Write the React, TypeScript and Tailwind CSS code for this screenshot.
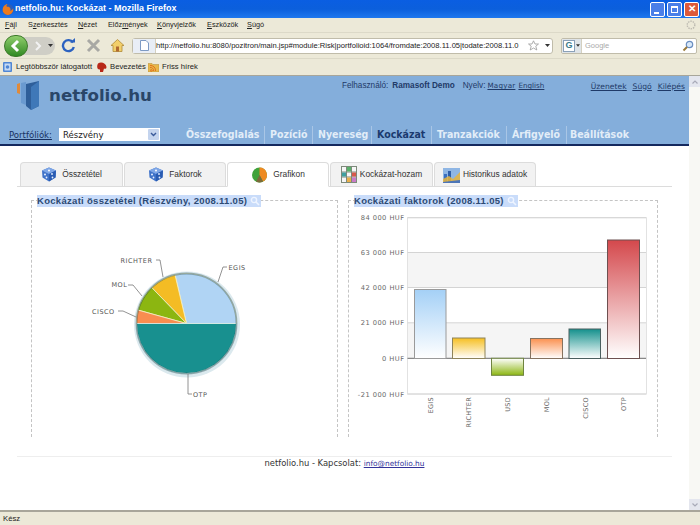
import React from "react";

const ui = { fontFamily: '"Liberation Sans", Tahoma, sans-serif' };
const dv = { fontFamily: '"DejaVu Sans", Verdana, sans-serif' };
const dvc = { fontFamily: '"DejaVu Sans Condensed", "DejaVu Sans", sans-serif' };

function Dice() {
  return (
    <svg width="16" height="15" viewBox="0 0 16 15">
      <path d="M8 0.5L15 3.5L14.5 10.5L8 14.5L1.5 10.5L1 3.5Z" fill="#3f72c8" />
      <path d="M8 0.5L15 3.5L8 7L1 3.5Z" fill="#7ea6e6" />
      <path d="M8 7L15 3.5L14.5 10.5L8 14.5Z" fill="#2a5cb2" />
      <circle cx="8" cy="3.5" r="1" fill="#fff" />
      <circle cx="4" cy="7.5" r="1" fill="#e8f0ff" />
      <circle cx="5.5" cy="10.5" r="0.9" fill="#e8f0ff" />
      <circle cx="11" cy="7" r="0.9" fill="#e8f0ff" />
      <circle cx="11.5" cy="10.5" r="0.9" fill="#e8f0ff" />
    </svg>
  );
}

function PieIcon() {
  return (
    <svg width="17" height="16" viewBox="0 0 17 16">
      <circle cx="8.5" cy="8" r="7.5" fill="#3fa23a" />
      <path d="M8.5 8L8.5 0.5A7.5 7.5 0 0 1 12 14.6Z" fill="#ee8a22" />
      <path d="M8.5 8L12 14.6A7.5 7.5 0 0 1 5 14.6Z" fill="#7c6a3a" />
    </svg>
  );
}

function MatrixIcon() {
  return (
    <svg width="16" height="17" viewBox="0 0 16 17">
      <rect x="0.5" y="0.5" width="15" height="16" fill="#f6f6f6" stroke="#7d8a7a" />
      <path d="M5.5 0.5V16.5M10.5 0.5V16.5M0.5 6H15.5M0.5 11H15.5" stroke="#7d8a7a" />
      <rect x="6" y="1" width="4" height="4.5" fill="#59b06a" />
      <rect x="11" y="6.5" width="4" height="4" fill="#d8584a" />
      <rect x="1" y="6.5" width="4" height="4" fill="#3fa0a0" />
      <rect x="11" y="11.5" width="4" height="4.5" fill="#c97ac8" />
      <rect x="6" y="11.5" width="4" height="4.5" fill="#e9b04a" />
    </svg>
  );
}

function HistIcon() {
  return (
    <svg width="17" height="16" viewBox="0 0 17 16">
      <rect x="0" y="1" width="17" height="15" fill="#8fb6e4" />
      <rect x="1" y="7" width="3" height="8" fill="#3a6fc0" />
      <rect x="5" y="4" width="3" height="11" fill="#2f5ea8" />
      <path d="M0 12L6 9L10 12L17 5V16H0Z" fill="#e7b53c" opacity="0.85" />
      <path d="M0 15L17 13V16H0Z" fill="#4d76b8" />
    </svg>
  );
}

function Tab({
  icon,
  label,
  active,
  gap,
  wide,
}: {
  icon: React.ReactNode;
  label: string;
  active?: boolean;
  gap: string;
  wide: string;
}) {
  return (
    <div
      className={`flex items-center justify-center rounded-t-[4px] border border-[#dcdcdc] text-[8.4px] text-[#333] ${wide} ${gap} ${
        active ? "h-[25px] -mb-px border-b-white bg-white" : "h-[24px] border-b-0 bg-[#f2f2f2]"
      }`}
    >
      {icon}
      <span>{label}</span>
    </div>
  );
}

function PieChart() {
  const cx = 166.5;
  const cy = 133.5;
  const r = 50;
  const sl = (x1: number, y1: number, x2: number, y2: number) =>
    `M${cx} ${cy}L${x1} ${y1}A${r} ${r} 0 0 0 ${x2} ${y2}Z`;
  return (
    <svg width="300" height="235" viewBox="12 11 300 235" className="block" style={dv}>
      <circle cx={cx + 0.5} cy={cy + 1} r={r + 3} fill="#dbe9ee" />
      <path d={sl(216.5, 133.5, 155, 84.8)} fill="#b0d4f4" stroke="#f4f0c8" strokeWidth="0.8" />
      <path d={sl(155, 84.8, 131.7, 97.5)} fill="#f4bc24" stroke="#f4f0c8" strokeWidth="0.8" />
      <path d={sl(131.7, 97.5, 117.8, 120)} fill="#8cb611" stroke="#f4f0c8" strokeWidth="0.8" />
      <path d={sl(117.8, 120, 116.5, 136)} fill="#f98d50" stroke="#f4f0c8" strokeWidth="0.8" />
      <path d={`M${cx - r} ${cy}A${r} ${r} 0 0 0 ${cx + r} ${cy}Z`} fill="#18908f" stroke="#e8f4f0" strokeWidth="0.8" />
      <circle cx={cx} cy={cy} r={r} fill="none" stroke="#123c44" strokeOpacity="0.38" strokeWidth="1.8" />
      <g fill="none" stroke="#777" strokeWidth="0.8">
        <path d="M198 92L203 77H207" />
        <path d="M143 87L140 70H136" />
        <path d="M122 106L113 95H108" />
        <path d="M116 127L103 121H98" />
        <path d="M168 184V204H172" />
      </g>
      <g fontSize="6.5" letterSpacing="0.5" fill="#555">
        <text x="208.5" y="79.5">EGIS</text>
        <text x="100.5" y="73">RICHTER</text>
        <text x="91.5" y="97">MOL</text>
        <text x="72" y="124">CISCO</text>
        <text x="173" y="207">OTP</text>
      </g>
    </svg>
  );
}

function BarChart() {
  const o = (x: number) => x - 349;
  const p = (y: number) => y - 207;
  const ticks: [string, number][] = [
    ["84 000 HUF", 217.7],
    ["63 000 HUF", 252.5],
    ["42 000 HUF", 287.5],
    ["21 000 HUF", 322.8],
    ["0 HUF", 358.3],
    ["-21 000 HUF", 394],
  ];
  const bars = [
    { n: "EGIS", x: 414.5, w: 31.5, y: 289.5, h: 69, c: "gA", s: "#9a9a9a" },
    { n: "RICHTER", x: 452.5, w: 32.5, y: 338, h: 20.5, c: "gB", s: "#8e845a" },
    { n: "MOL", x: 530.5, w: 32, y: 338.5, h: 20, c: "gC", s: "#86725f" },
    { n: "CISCO", x: 569, w: 31.5, y: 329, h: 29.5, c: "gD", s: "#4a5f5f" },
    { n: "OTP", x: 607.5, w: 32, y: 240, h: 118.5, c: "gE", s: "#6d5050" },
  ];
  const names: [number, string][] = [
    [430, "EGIS"],
    [468.5, "RICHTER"],
    [507.5, "USD"],
    [546, "MOL"],
    [585, "CISCO"],
    [623.5, "OTP"],
  ];
  return (
    <svg width="308" height="230" viewBox="0 0 308 230" className="block" style={dv}>
      <defs>
        {[
          ["gA", "#a4d0f6"],
          ["gB", "#f6bf22"],
          ["gC", "#fb9150"],
          ["gD", "#14908c"],
          ["gE", "#d4484c"],
        ].map(([id, c]) => (
          <linearGradient key={id} id={id} x1="0" y1="0" x2="0" y2="1">
            <stop offset="0" stopColor={c} />
            <stop offset="1" stopColor="#ffffff" />
          </linearGradient>
        ))}
        <linearGradient id="gF" x1="0" y1="0" x2="0" y2="1">
          <stop offset="0" stopColor="#ffffff" />
          <stop offset="1" stopColor="#8cb611" />
        </linearGradient>
      </defs>
      <rect x={o(408)} y={p(252.5)} width="238" height="35" fill="#f5f5f5" />
      <rect x={o(408)} y={p(322.8)} width="238" height="35.5" fill="#f5f5f5" />
      <rect x={o(407.5)} y={p(217.7)} width="239" height="176.3" fill="none" stroke="#e2e2e2" />
      {ticks.map(([t, y]) => (
        <g key={t}>
          <line x1={o(407.5)} x2={o(646)} y1={p(y)} y2={p(y)} stroke={t === "0 HUF" ? "#888" : "#d4d4d4"} strokeWidth={t === "0 HUF" ? 1.2 : 1} />
          <text x={o(404.5)} y={p(y) + 2.5} textAnchor="end" fontSize="6.7" letterSpacing="0.45" fill="#666">
            {t}
          </text>
        </g>
      ))}
      {bars.map((b) => (
        <rect key={b.n} x={o(b.x)} y={p(b.y)} width={b.w} height={b.h} fill={`url(#${b.c})`} stroke={b.s} strokeWidth="1" />
      ))}
      <rect x={o(491.5)} y={p(358.3)} width="32" height="17" fill="url(#gF)" stroke="#6f8440" />
      {names.map(([x, t]) => (
        <text
          key={t}
          x={o(x) + 2.5}
          y={p(397)}
          textAnchor="end"
          fontSize="6.5"
          letterSpacing="0.3"
          fill="#666"
          transform={`rotate(-90 ${o(x) + 2.5} ${p(397)})`}
        >
          {t}
        </text>
      ))}
    </svg>
  );
}

function PanelTitle({ text }: { text: string }) {
  return (
    <div className="absolute -top-[6px] left-[5px] flex h-[12px] items-center bg-[#c9dcfa] pr-[1px] text-[9.5px] font-bold leading-none tracking-[0.3px] text-[#2c4a74]">
      <span>{text}</span>
      <svg className="ml-[3px]" width="10" height="10" viewBox="0 0 10 10">
        <circle cx="4" cy="4" r="2.6" fill="none" stroke="#eef4ff" strokeWidth="1.4" />
        <path d="M6 6L9 9" stroke="#eef4ff" strokeWidth="1.6" />
      </svg>
    </div>
  );
}

function Sep() {
  return <span className="h-[18px] w-px bg-[#a9c6e6]" />;
}

function NavItem({ t, active, cls }: { t: string; active?: boolean; cls: string }) {
  return (
    <span className={`${cls} whitespace-nowrap text-[10.5px] font-bold ${active ? "text-[#1b3a6e]" : "text-[#e2edf8]"}`}>
      {t}
    </span>
  );
}

function Menu({ u, rest, pre, cls }: { pre?: string; u: string; rest: string; cls: string }) {
  return (
    <span className={cls}>
      {pre}
      <span className="underline">{u}</span>
      {rest}
    </span>
  );
}

export default function App() {
  return (
    <div className="flex h-[525px] w-[700px] flex-col overflow-hidden bg-white" style={ui}>
      {/* title bar */}
      <div className="flex h-[18px] items-center bg-gradient-to-b from-[#0a5ee2] via-[#0b5fdc] to-[#1f78ee] pl-[2px] pr-[1px]">
        <svg width="12" height="13" viewBox="0 0 13 13">
          <circle cx="6.5" cy="6.5" r="6" fill="#2c5db8" />
          <path d="M1 9C0 5 2 1 6 .5C4.5 2 4.5 3 5.5 3.5C8 3 10 5 9 8C11 7.5 12 6 12 5C13 9 10 12.5 6.5 12.5C4 12.5 2 11 1 9Z" fill="#ec7a1e" />
        </svg>
        <span className="ml-[1px] text-[9px] font-bold text-white">netfolio.hu: Kockázat - Mozilla Firefox</span>
        <div className="ml-auto flex gap-[2px]">
          <div className="flex h-[15px] w-[15px] items-end rounded-[2px] border border-white bg-[#4a7fe8] pb-[2px] pl-[3px]">
            <span className="h-[2px] w-[5px] bg-white" />
          </div>
          <div className="flex h-[15px] w-[15px] items-center justify-center rounded-[2px] border border-white bg-[#4a7fe8]">
            <span className="h-[7px] w-[7px] border border-t-2 border-white" />
          </div>
          <div className="flex h-[15px] w-[15px] items-center justify-center rounded-[2px] border border-white bg-[#dd5a3a] text-[10px] font-bold leading-none text-white">
            ✕
          </div>
        </div>
      </div>

      {/* menu bar */}
      <div className="flex h-[14px] items-center bg-[#ece9d8] text-[7.3px] text-[#222]">
        <Menu cls="ml-[5px] w-[23px]" u="F" rest="ájl" />
        <Menu cls="w-[50px]" pre="S" u="z" rest="erkesztés" />
        <Menu cls="w-[30px]" u="N" rest="ézet" />
        <Menu cls="w-[49px]" pre="Előz" u="m" rest="ények" />
        <Menu cls="w-[50px]" u="K" rest="önyvjelzők" />
        <Menu cls="w-[40px]" u="E" rest="szközök" />
        <Menu cls="" u="S" rest="úgó" />
        <svg className="ml-auto mr-[4px]" width="10" height="10" viewBox="0 0 10 10">
          <circle cx="5" cy="5" r="3.8" fill="none" stroke="#bdbab0" strokeWidth="1.4" strokeDasharray="1.4 1" />
        </svg>
      </div>

      {/* nav bar */}
      <div className="flex h-[26px] items-center border-t border-[#dcd9c8] bg-[#ece9d8] pl-[4px]">
        <div className="relative flex h-[18px] w-[51px] items-center rounded-full bg-[#cfcec6]">
          <div className="absolute left-0 -top-[2px] flex h-[22px] w-[24px] items-center justify-center rounded-full border border-[#3d7a2a] bg-gradient-to-b from-[#8fce6c] to-[#2e8a22]">
            <svg width="14" height="14" viewBox="0 0 14 14">
              <path d="M9 2L4 7L9 12" fill="none" stroke="#fff" strokeWidth="3" />
            </svg>
          </div>
          <svg className="ml-[30px]" width="8" height="10" viewBox="0 0 8 10">
            <path d="M2 1L6 5L2 9" fill="none" stroke="#f2f2f2" strokeWidth="2" />
          </svg>
          <svg className="ml-[6px]" width="5" height="3" viewBox="0 0 5 3">
            <path d="M0 0H5L2.5 3Z" fill="#333" />
          </svg>
        </div>
        <svg className="ml-[6px]" width="15" height="15" viewBox="0 0 15 15">
          <path d="M12 4.5A5.5 5.5 0 1 0 12.8 9" fill="none" stroke="#2c62c0" strokeWidth="2.4" />
          <path d="M9 4.5H14V0Z" fill="#2c62c0" />
        </svg>
        <svg className="ml-[10px]" width="15" height="15" viewBox="0 0 15 15">
          <path d="M2 2L13 13M13 2L2 13" stroke="#a8a8a4" strokeWidth="3" />
        </svg>
        <svg className="ml-[9px]" width="15" height="15" viewBox="0 0 15 15">
          <path d="M1 7.5L7.5 1.5L14 7.5H12V13.5H3V7.5Z" fill="#f2cf6a" stroke="#b08a38" strokeWidth="0.8" />
          <rect x="6" y="8.5" width="3" height="5" fill="#b06a30" />
        </svg>
        <div className="ml-[7px] flex h-[16px] w-[421px] items-center rounded-[3px] border border-[#c0bcaa] bg-white">
          <div className="flex h-full w-[23px] items-center justify-center border-r border-[#d4d0c0] bg-[#e9eef6]">
            <svg width="9" height="11" viewBox="0 0 9 11">
              <path d="M.5 .5H6L8.5 3V10.5H.5Z" fill="#fff" stroke="#7d9ac4" />
            </svg>
          </div>
          <span className="w-[369px] whitespace-nowrap text-[7.6px] text-[#222]">
            http://netfolio.hu:8080/pozitron/main.jsp#module:Risk|portfolioid:1064/fromdate:2008.11.05|todate:2008.11.0
          </span>
          <svg className="ml-[3px]" width="11" height="11" viewBox="0 0 11 11">
            <path d="M5.5 .8L7 4H10.5L7.8 6.2L8.8 10L5.5 8L2.2 10L3.2 6.2L.5 4H4Z" fill="none" stroke="#9a9a9a" strokeWidth="0.8" />
          </svg>
          <svg className="ml-[6px]" width="5" height="3" viewBox="0 0 5 3">
            <path d="M0 0H5L2.5 3Z" fill="#333" />
          </svg>
        </div>
        <div className="ml-[8px] flex h-[16px] w-[136px] items-center rounded-[2px] border border-[#c0bcaa] bg-white">
          <div className="flex h-full w-[20px] items-center gap-[1px] border-r border-[#d4d0c0] bg-[#dfe4e8] pl-[1px]">
            <span className="flex h-[12px] w-[12px] items-center justify-center border border-[#8aa0b8] bg-white text-[9px] font-bold leading-none text-[#3a7a8a]">
              G
            </span>
            <svg width="4" height="3" viewBox="0 0 5 3">
              <path d="M0 0H5L2.5 3Z" fill="#333" />
            </svg>
          </div>
          <span className="ml-[3px] text-[7.5px] text-[#aaa]">Google</span>
          <svg className="ml-auto mr-[2px]" width="12" height="12" viewBox="0 0 12 12">
            <circle cx="7.5" cy="4.5" r="3.2" fill="#d8e8f8" stroke="#6a8ec0" strokeWidth="1.2" />
            <path d="M5 7L1.5 10.5" stroke="#9a7a3a" strokeWidth="2" />
          </svg>
        </div>
      </div>

      {/* bookmarks */}
      <div className="flex h-[17px] items-center border-t border-[#dcd9c8] bg-[#ece9d8] pl-[3px] text-[7.7px] text-[#222]">
        <svg width="9" height="10" viewBox="0 0 9 10">
          <rect width="9" height="10" rx="1" fill="#4f86d4" />
          <rect x="1.5" y="1.5" width="6" height="7" fill="#c6daf4" />
          <circle cx="4.5" cy="5" r="1.8" fill="#4f86d4" />
        </svg>
        <span className="ml-[4px] w-[75px] whitespace-nowrap">Legtöbbször látogatott</span>
        <svg className="ml-[5px]" width="11" height="11" viewBox="0 0 11 11">
          <path d="M2 1.5C5 -.5 10 1 10.5 5C10.5 7 9 7 8 6.5L7 10H4L4 7.5C1 8 .5 4 2 1.5Z" fill="#b82818" />
        </svg>
        <span className="ml-[3px] w-[34px]">Bevezetés</span>
        <svg className="ml-[4px]" width="11" height="10" viewBox="0 0 11 10">
          <path d="M0 1.5H4L5 2.5H11V10H0Z" fill="#e8b84a" stroke="#b08a38" strokeWidth="0.5" />
          <path d="M2.5 8.5A.8 .8 0 1 0 2.5 8.4M2 5.5A3 3 0 0 1 5.5 9M2 3.5A5 5 0 0 1 7.5 9" fill="none" stroke="#e06a18" strokeWidth="0.9" />
        </svg>
        <span className="ml-[3px]">Friss hírek</span>
      </div>

      {/* page and scrollbar */}
      <div className="flex min-h-0 flex-1 border-t border-[#a8a69a]">
        <div className="flex min-w-0 flex-1 flex-col bg-white">
          {/* site header */}
          <header className="flex h-[70px] flex-col border-b-2 border-[#14295e] bg-[#84aedb]">
            <div className="flex h-[50px]">
              <div className="ml-[16px] mt-[5px] flex items-start">
                <svg width="24" height="29" viewBox="0 0 24 29">
                  <path d="M1 3L4 2V13L1 12Z" fill="#e08a3a" />
                  <path d="M5 2L10 1V24L5 22Z" fill="#6a9ad0" />
                  <path d="M10 3L23 0V25L15 29L10 25Z" fill="#2f5f9a" />
                  <path d="M15 6L23 0V25L15 29Z" fill="#3f78b8" />
                </svg>
                <span className="ml-[9px] mt-[3px] text-[16.7px] font-bold leading-[22px] text-[#2a4668]" style={dv}>
                  netfolio.hu
                </span>
              </div>
              <div className="ml-[190px] mt-[5px] flex h-[11px] items-center whitespace-nowrap text-[8.2px] text-[#1f3a68]">
                <span>Felhasználó:</span>
                <span className="ml-[4px] font-bold">Ramasoft Demo</span>
                <span className="ml-[8px]">Nyelv:</span>
                <a className="ml-[2px] text-[7.2px] tracking-[0.2px] underline" style={dv}>Magyar</a>
                <a className="ml-[3px] text-[7.2px] underline" style={dv}>English</a>
              </div>
              <div className="ml-auto mr-[4px] mt-[5px] flex h-[11px] items-center gap-[6px] whitespace-nowrap text-[7.6px] text-[#1f3a68] underline" style={dv}>
                <a>Üzenetek</a>
                <a>Súgó</a>
                <a>Kilépés</a>
              </div>
            </div>
            <div className="flex h-[19px] items-center" style={dvc}>
              <span className="ml-[9px] w-[45px] text-[9.5px] text-[#17305f] underline">Portfóliók:</span>
              <div className="ml-[5px] flex h-[13px] w-[101px] items-center bg-white pl-[4px] pr-[1px] text-[9.5px] text-[#222]">
                <span>Részvény</span>
                <span className="ml-auto flex h-[11px] w-[11px] items-center justify-center rounded-[1px] bg-[#c4d4ee]">
                  <svg width="7" height="5" viewBox="0 0 7 5">
                    <path d="M1 1L3.5 3.5L6 1" fill="none" stroke="#3a5a9a" strokeWidth="1.4" />
                  </svg>
                </span>
              </div>
              <NavItem t="Összefoglalás" cls="ml-[26px] w-[78px]" />
              <Sep />
              <NavItem t="Pozíció" cls="ml-[5px] w-[42px]" />
              <Sep />
              <NavItem t="Nyereség" cls="ml-[5px] w-[53px]" />
              <Sep />
              <NavItem t="Kockázat" active cls="ml-[5px] w-[54px]" />
              <Sep />
              <NavItem t="Tranzakciók" cls="ml-[5px] w-[69px]" />
              <Sep />
              <NavItem t="Árfigyelő" cls="ml-[5px] w-[54px]" />
              <Sep />
              <NavItem t="Beállítások" cls="ml-[3px]" />
            </div>
          </header>

          {/* tabs */}
          <div className="mx-[17px] mt-[17px] flex h-[24px] items-end gap-[1px] border-b border-[#dcdcdc] pl-[3px]">
            <Tab wide="w-[103px]" gap="gap-[5px]" icon={<Dice />} label="Összetétel" />
            <Tab wide="w-[102px]" gap="gap-[5px]" icon={<Dice />} label="Faktorok" />
            <Tab wide="w-[102px]" gap="gap-[5px]" active icon={<PieIcon />} label="Grafikon" />
            <Tab wide="w-[103px]" gap="gap-[3px]" icon={<MatrixIcon />} label="Kockázat-hozam" />
            <Tab wide="w-[102px]" gap="gap-[3px]" icon={<HistIcon />} label="Historikus adatok" />
          </div>

          {/* chart panels */}
          <div className="ml-[31px] mt-[13px] flex gap-[10px]">
            <div className="relative h-[237px] w-[307px] border-x border-t border-dashed border-[#c4c4c4]">
              <PanelTitle text="Kockázati összetétel (Részvény, 2008.11.05)" />
              <PieChart />
            </div>
            <div className="relative h-[237px] w-[310px] border-x border-t border-dashed border-[#c4c4c4]">
              <PanelTitle text="Kockázati faktorok (2008.11.05)" />
              <div className="pt-[6px]">
                <BarChart />
              </div>
            </div>
          </div>

          {/* footer */}
          <div className="mx-[17px] mt-[19px] border-t border-[#eeeeee] text-center text-[8.4px] text-[#333]" style={dv}>
            netfolio.hu - Kapcsolat: <a className="text-[7.4px] text-[#33339a] underline">info@netfolio.hu</a>
          </div>
        </div>

        {/* scrollbar */}
        <div className="flex w-[11px] flex-col justify-between bg-[#f8f8f4]">
          <div className="flex h-[11px] items-center justify-center bg-[#e4e6ee]">
            <svg width="6" height="4" viewBox="0 0 6 4"><path d="M.5 3.5L3 1L5.5 3.5" fill="none" stroke="#a8aab8" strokeWidth="1.2" /></svg>
          </div>
          <div className="flex h-[11px] items-center justify-center bg-[#e4e6ee]">
            <svg width="6" height="4" viewBox="0 0 6 4"><path d="M.5 .5L3 3L5.5 .5" fill="none" stroke="#a8aab8" strokeWidth="1.2" /></svg>
          </div>
        </div>
      </div>

      {/* status bar */}
      <div className="flex h-[15px] items-center border-t-2 border-[#a8a69a] bg-[#ece9d8] pl-[3px] text-[7.7px] text-[#222]">
        Kész
      </div>
    </div>
  );
}
